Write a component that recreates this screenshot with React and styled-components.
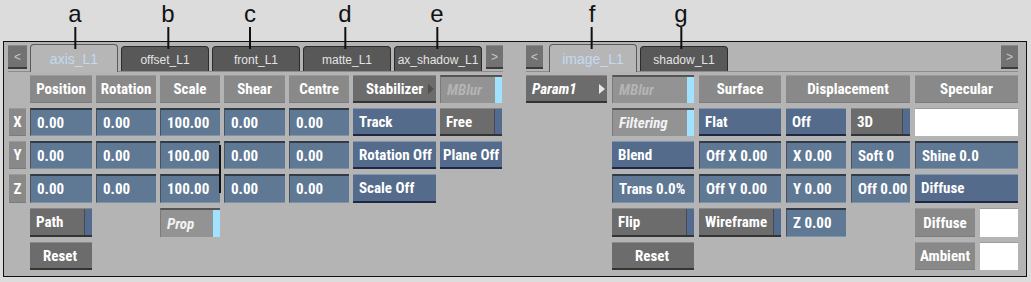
import React from "react";
import styled, { createGlobalStyle, css } from "styled-components";

const UI_FONT = `"Liberation Sans Narrow", "Roboto Condensed", "Liberation Sans", Arial, sans-serif`;

const GlobalStyle = createGlobalStyle`
  html, body {
    margin: 0;
    padding: 0;
    background: #dcdcdc;
  }
  body {
    width: 1031px;
    height: 282px;
    overflow: hidden;
    font-family: "Liberation Sans", Arial, sans-serif;
  }
`;

const Page = styled.div`
  position: relative;
  width: 1031px;
  height: 282px;
  padding-top: 41px;
  box-sizing: border-box;
`;

const Callout = styled.div`
  position: absolute;
  top: 0;
  display: flex;
  flex-direction: column;
  align-items: center;
  transform: translateX(-50%);
  z-index: 2;

  span {
    font-size: 24px;
    line-height: 27px;
    color: #111;
  }
  i {
    display: block;
    width: 2px;
    height: 22px;
    background: #111;
  }
`;

const Panel = styled.div`
  margin-left: 3px;
  width: 1024px;
  height: 236px;
  border: 1px solid #111;
  background: #b4b4b4;
  display: flex;
  box-sizing: border-box;
`;

const Half = styled.div`
  position: relative;
  width: 511px;
  display: flex;
  flex-direction: column;
  padding: 2px ${(p) => p.$padRight}px 0 ${(p) => p.$padLeft}px;
  box-sizing: border-box;
`;

const TabStrip = styled.div`
  display: flex;
  align-items: flex-end;
  gap: 3px;
  height: 27px;
  border-bottom: 1px solid #8c8c8c;
`;

const ArrowBtn = styled.div`
  width: ${(p) => p.$w || 17}px;
  height: 21px;
  margin-bottom: 2px;
  margin-left: ${(p) => (p.$push ? "auto" : p.$ml ? `${p.$ml}px` : "0")};
  margin-right: ${(p) => p.$mr || 0}px;
  background: #727272;
  border-top: 1px solid #8a8a8a;
  border-bottom: 2px solid #3c3c3c;
  color: #c8c8c8;
  font: 12px "Liberation Sans", Arial, sans-serif;
  display: flex;
  align-items: center;
  justify-content: center;
`;

const Tab = styled.div`
  width: 88px;
  height: 25px;
  box-sizing: border-box;
  border: 1px solid #2c2c2c;
  border-bottom: none;
  border-radius: 4px 4px 0 0;
  background: #585858;
  color: #e4e4e4;
  font: 12px "Liberation Sans", Arial, sans-serif;
  display: flex;
  align-items: center;
  justify-content: center;
  padding-top: 1px;

  ${(p) =>
    p.$active &&
    css`
      height: 28px;
      margin-bottom: -1px;
      background: #b6b6b6;
      border-color: #5a5a5a;
      color: #c2daf2;
      font-size: 14px;
      padding-top: 0;
    `}
`;

const Grid = styled.div`
  display: grid;
  grid-template-columns: ${(p) => p.$cols};
  grid-template-rows: 28px 28px 28px 29px 29px 28px;
  column-gap: ${(p) => p.$gap}px;
  row-gap: 5px;
  margin: 3px 0 0 ${(p) => p.$ml}px;
  font-family: ${UI_FONT};
  font-size: 15px;
  font-weight: bold;
  color: #fff;
`;

const Cell = styled.div`
  grid-column: ${(p) => p.$col} / span ${(p) => p.$span || 1};
  grid-row: ${(p) => p.$row};
  position: relative;
  display: flex;
  align-items: center;
  box-sizing: border-box;
  white-space: nowrap;
  overflow: hidden;
`;

const Header = styled(Cell)`
  justify-content: center;
  background: #898989;
  border-top: 1px solid #9a9a9a;
  border-bottom: 1px solid #7c7c7c;
`;

const Field = styled(Cell)`
  padding-left: 6px;
  background: #5f7894;
  border-top: 2px solid #323c48;
  border-left: 1px solid #48525e;
  border-bottom: 1px solid #7f93a8;
`;

const BlueButton = styled(Cell)`
  padding-left: ${(p) => p.$pad ?? 6}px;
  background: #546b8b;
  border-top: 1px solid #7f94ad;
  border-bottom: 2px solid #1e2844;
`;

const GreyButton = styled(Cell)`
  padding-left: 6px;
  padding-right: 8px;
  background: #6c6c6c;
  border-top: 1px solid #888;
  border-bottom: 2px solid #343434;
  justify-content: ${(p) => (p.$center ? "center" : "flex-start")};

  ${(p) =>
    p.$strip &&
    css`
      &::after {
        content: "";
        position: absolute;
        top: 0;
        right: 0;
        bottom: 0;
        width: 7px;
        background: #526b8e;
        border-left: 1px solid #48484f;
      }
    `}
`;

const LightToggle = styled(Cell)`
  padding-left: 6px;
  background: #939393;
  border-top: 2px solid #555;
  border-left: 1px solid #7a7a7a;
  font-style: italic;
  color: ${(p) => (p.$dim ? "#b4b4b4" : "#f2f2f2")};

  &::after {
    content: "";
    position: absolute;
    top: 0;
    right: 0;
    bottom: 0;
    width: 7px;
    background: #a0e2ff;
  }
`;

const MenuButton = styled(Cell)`
  padding-left: ${(p) => (p.$italic ? 6 : 13)}px;
  background: #6c6c6c;
  border-top: 1px solid #888;
  border-bottom: 2px solid #343434;
  font-style: ${(p) => (p.$italic ? "italic" : "normal")};

  &::after {
    content: "";
    position: absolute;
    right: 2px;
    top: 50%;
    margin-top: -5px;
    border-left: 6px solid ${(p) => (p.$italic ? "#e8e8e8" : "#505050")};
    border-top: 5px solid transparent;
    border-bottom: 5px solid transparent;
  }
`;

const Swatch = styled(Cell)`
  background: #fff;
  border-top: 1px solid #9c9c9c;
`;

const Cursor = styled.div`
  position: absolute;
  left: 215px;
  top: 103px;
  width: 2px;
  height: 48px;
  background: #111;
`;

const callouts = [
  ["a", 75],
  ["b", 168],
  ["c", 250],
  ["d", 345],
  ["e", 437],
  ["f", 592],
  ["g", 681],
];

const leftTabs = ["axis_L1", "offset_L1", "front_L1", "matte_L1", "ax_shadow_L1"];
const rightTabs = ["image_L1", "shadow_L1"];
const leftHeaders = ["Position", "Rotation", "Scale", "Shear", "Centre"];
const axes = ["X", "Y", "Z"];
const scaleVals = ["0.00", "0.00", "100.00", "0.00", "0.00"];

export default function App() {
  return (
    <>
      <GlobalStyle />
      <Page>
        {callouts.map(([l, x]) => (
          <Callout key={l} style={{ left: x }}>
            <span>{l}</span>
            <i />
          </Callout>
        ))}
        <Panel>
          <Half $padLeft={4} $padRight={12}>
            <TabStrip>
              <ArrowBtn $w={19}>&lt;</ArrowBtn>
              {leftTabs.map((t, i) => (
                <Tab key={t} $active={i === 0}>
                  {t}
                </Tab>
              ))}
              <ArrowBtn $ml={1}>&gt;</ArrowBtn>
            </TabStrip>
            <Grid $cols="17px 62px 60px 60px 61px 60px 83px 62px" $gap={4} $ml={1}>
              {leftHeaders.map((h, i) => (
                <Header key={h} $col={i + 2} $row={1}>
                  {h}
                </Header>
              ))}
              <MenuButton $col={7} $row={1}>Stabilizer</MenuButton>
              <LightToggle $col={8} $row={1} $dim>
                MBlur
              </LightToggle>

              {axes.map((a, r) => (
                <React.Fragment key={a}>
                  <Header $col={1} $row={r + 2}>
                    {a}
                  </Header>
                  {scaleVals.map((v, c) => (
                    <Field key={c} $col={c + 2} $row={r + 2}>
                      {v}
                    </Field>
                  ))}
                </React.Fragment>
              ))}

              <BlueButton $col={7} $row={2}>Track</BlueButton>
              <GreyButton $col={8} $row={2} $strip>
                Free
              </GreyButton>
              <BlueButton $col={7} $row={3}>Rotation Off</BlueButton>
              <BlueButton $col={8} $row={3} $pad={3}>
                Plane Off
              </BlueButton>
              <BlueButton $col={7} $row={4}>Scale Off</BlueButton>

              <GreyButton $col={2} $row={5} $strip>
                Path
              </GreyButton>
              <LightToggle $col={4} $row={5}>Prop</LightToggle>
              <GreyButton $col={2} $row={6} $center>
                Reset
              </GreyButton>
            </Grid>
            <Cursor />
          </Half>

          <Half $padLeft={11} $padRight={8}>
            <TabStrip>
              <ArrowBtn $mr={3}>&lt;</ArrowBtn>
              {rightTabs.map((t, i) => (
                <Tab key={t} $active={i === 0}>
                  {t}
                </Tab>
              ))}
              <ArrowBtn $push>&gt;</ArrowBtn>
            </TabStrip>
            <Grid $cols="81px 82px 82px 60px 59px 60px 38px" $gap={5} $ml={0}>
              <MenuButton $col={1} $row={1} $italic>
                Param1
              </MenuButton>
              <LightToggle $col={2} $row={1} $dim>
                MBlur
              </LightToggle>
              <Header $col={3} $row={1}>Surface</Header>
              <Header $col={4} $span={2} $row={1}>
                Displacement
              </Header>
              <Header $col={6} $span={2} $row={1}>
                Specular
              </Header>

              <LightToggle $col={2} $row={2}>Filtering</LightToggle>
              <BlueButton $col={3} $row={2}>Flat</BlueButton>
              <BlueButton $col={4} $row={2}>Off</BlueButton>
              <GreyButton $col={5} $row={2} $strip>
                3D
              </GreyButton>
              <Swatch $col={6} $span={2} $row={2} />

              <BlueButton $col={2} $row={3}>Blend</BlueButton>
              <Field $col={3} $row={3}>Off X 0.00</Field>
              <Field $col={4} $row={3}>X 0.00</Field>
              <Field $col={5} $row={3}>Soft 0</Field>
              <Field $col={6} $span={2} $row={3}>
                Shine 0.0
              </Field>

              <Field $col={2} $row={4}>Trans 0.0%</Field>
              <Field $col={3} $row={4}>Off Y 0.00</Field>
              <Field $col={4} $row={4}>Y 0.00</Field>
              <Field $col={5} $row={4}>Off 0.00</Field>
              <BlueButton $col={6} $span={2} $row={4}>
                Diffuse
              </BlueButton>

              <GreyButton $col={2} $row={5} $strip>
                Flip
              </GreyButton>
              <GreyButton $col={3} $row={5} $strip>
                Wireframe
              </GreyButton>
              <Field $col={4} $row={5}>Z 0.00</Field>
              <Header $col={6} $row={5}>Diffuse</Header>
              <Swatch $col={7} $row={5} />

              <GreyButton $col={2} $row={6} $center>
                Reset
              </GreyButton>
              <Header $col={6} $row={6}>Ambient</Header>
              <Swatch $col={7} $row={6} />
            </Grid>
          </Half>
        </Panel>
      </Page>
    </>
  );
}
